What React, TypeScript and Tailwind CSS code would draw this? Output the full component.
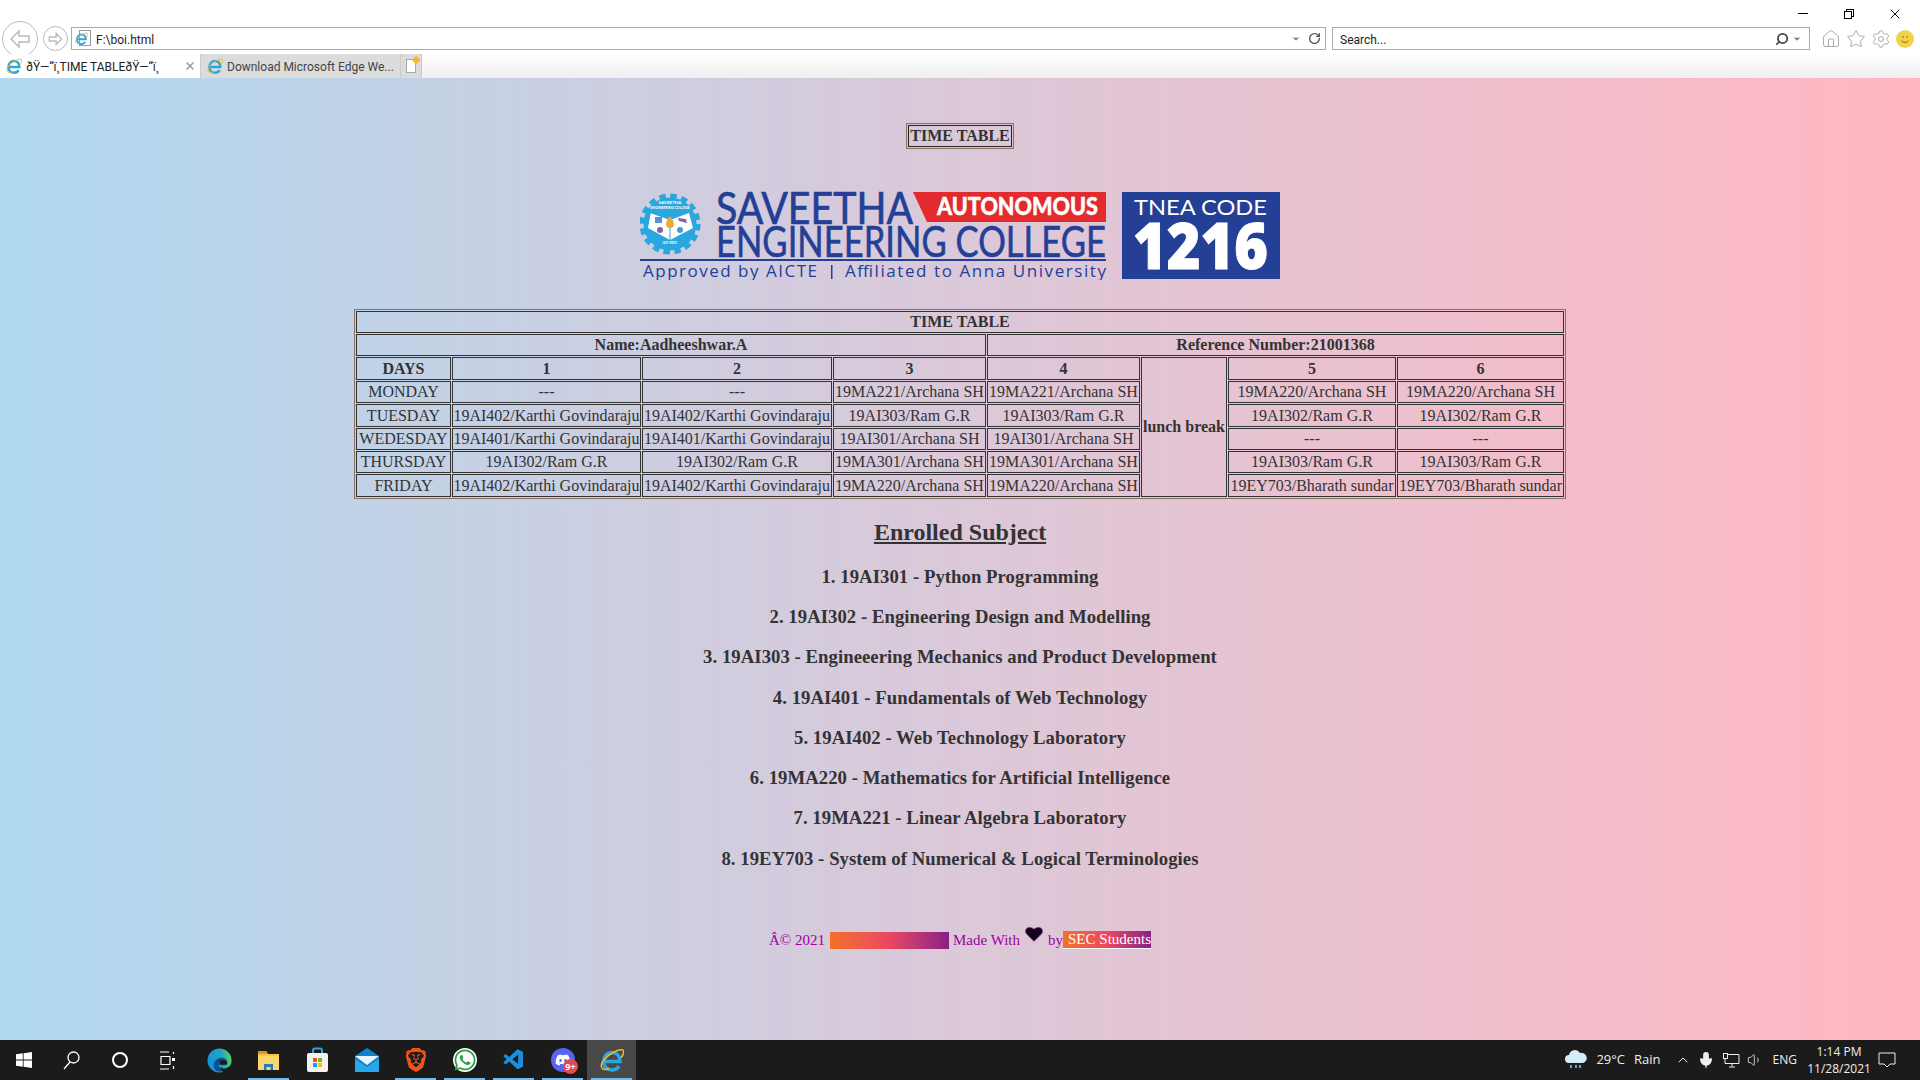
import { ChevronDown, ChevronUp, Home, Mic, RotateCw, Search, Settings, Star, Volume1, X } from 'lucide-react';
import { FaDiscord, FaWhatsapp } from 'react-icons/fa';
import { SiBrave } from 'react-icons/si';
import { VscVscode } from 'react-icons/vsc';

const rows = [
  { day: 'MONDAY', height: 'h-[22px]', cells: ['---', '---', '19MA221/Archana SH', '19MA221/Archana SH', '19MA220/Archana SH', '19MA220/Archana SH'] },
  { day: 'TUESDAY', height: 'h-[23px]', cells: ['19AI402/Karthi Govindaraju', '19AI402/Karthi Govindaraju', '19AI303/Ram G.R', '19AI303/Ram G.R', '19AI302/Ram G.R', '19AI302/Ram G.R'] },
  { day: 'WEDESDAY', height: 'h-[22px]', cells: ['19AI401/Karthi Govindaraju', '19AI401/Karthi Govindaraju', '19AI301/Archana SH', '19AI301/Archana SH', '---', '---'] },
  { day: 'THURSDAY', height: 'h-[22px]', cells: ['19AI302/Ram G.R', '19AI302/Ram G.R', '19MA301/Archana SH', '19MA301/Archana SH', '19AI303/Ram G.R', '19AI303/Ram G.R'] },
  { day: 'FRIDAY', height: 'h-[23px]', cells: ['19AI402/Karthi Govindaraju', '19AI402/Karthi Govindaraju', '19MA220/Archana SH', '19MA220/Archana SH', '19EY703/Bharath sundar', '19EY703/Bharath sundar'] },
];

const subjects = [
  '1. 19AI301 - Python Programming',
  '2. 19AI302 - Engineering Design and Modelling',
  '3. 19AI303 - Engineeering Mechanics and Product Development',
  '4. 19AI401 - Fundamentals of Web Technology',
  '5. 19AI402 - Web Technology Laboratory',
  '6. 19MA220 - Mathematics for Artificial Intelligence',
  '7. 19MA221 - Linear Algebra Laboratory',
  '8. 19EY703 - System of Numerical & Logical Terminologies',
];

const cellClass = 'border border-[#333] p-0 text-center align-middle whitespace-nowrap leading-[18px]';

const IeIcon = ({ size = 16 }: { size?: number }) => (
  <svg width={size} height={size} viewBox="0 0 24 24" fill="none">
    <path d="M4.500 13.500h15.500c0-5.500-3.300-9-8-9s-8.500 4-8.500 9 3.800 8.500 8.500 8.500c3.400 0 5.700-1.500 6.900-3.800" stroke="#2ba6de" strokeWidth="3.600" />
    <path d="M2 20C-1 16 6 8 14 4c5-2.500 9-3 9.500-1 .5 2-1 5-2.500 7M2 20c.8 2 4 2 7 .5" stroke="#efb82c" strokeWidth="1.500" />
  </svg>
);

const PageIcon = () => (
  <div className="relative h-[17px] w-[16px]">
    <div className="absolute right-0 top-0 h-[16px] w-[12px] border border-[#999] bg-white" />
    <div className="absolute left-0 top-[2px]">
      <IeIcon size={13} />
    </div>
  </div>
);

const Logo = () => (
  <svg width="640" height="90" viewBox="0 0 640 90" className="block">
    <circle cx="30" cy="34" r="28" fill="none" stroke="#2aa7df" strokeWidth="5" strokeDasharray="6.500 4.500" />
    <circle cx="30" cy="34" r="26.500" fill="#2aa7df" />
    <path d="M10.700 23.300 30 30 49 23 53 38 30 50 8 38Z" fill="#fff" />
    <path d="M30 32V51" stroke="#2aa7df" strokeWidth="1" />
    <path d="M30 26c2 3 4 5 4 8a4 4 0 0 1-8 0c0-3 2-5 4-8Z" fill="#f1a92f" />
    <rect x="15" y="27" width="7" height="6" fill="#5a8fd8" />
    <path d="M38 28l8 1 1 4-8-2Z" fill="#8a5db0" />
    <circle cx="20" cy="40" r="3" fill="#8a5db0" />
    <circle cx="40" cy="40" r="3" fill="#3f9bd0" />
    <text x="30" y="14" fontSize="4.500" fontWeight="700" textAnchor="middle" fill="#fff" fontFamily="Lato, sans-serif">SAVEETHA</text>
    <text x="30" y="19" fontSize="3.500" fontWeight="700" textAnchor="middle" fill="#fff" fontFamily="Lato, sans-serif">ENGINEERING COLLEGE</text>
    <text x="30" y="54" fontSize="3.500" fontWeight="700" textAnchor="middle" fill="#fff" fontFamily="Lato, sans-serif">ISO 9001</text>
    <text x="76" y="34" fontSize="44" fill="#233f96" stroke="#233f96" strokeWidth="0.700" fontFamily="Lato, sans-serif" textLength="197" lengthAdjust="spacingAndGlyphs">SAVEETHA</text>
    <polygon points="273,2 466,2 466,32 287,32" fill="#e32b2e" />
    <text x="297" y="25" fontSize="24" fontWeight="900" fill="#fff" stroke="#fff" strokeWidth="0.400" fontFamily="Lato, sans-serif" textLength="161" lengthAdjust="spacingAndGlyphs">AUTONOMOUS</text>
    <text x="76" y="67" fontSize="43" fill="#233f96" stroke="#233f96" strokeWidth="0.600" fontFamily="Lato, sans-serif" textLength="390" lengthAdjust="spacingAndGlyphs">ENGINEERING COLLEGE</text>
    <rect x="0" y="69" width="466" height="2" fill="#233f96" />
    <text x="3" y="87" fontSize="17" fill="#233f96" fontFamily="'Open Sans', sans-serif" textLength="174" lengthAdjust="spacing">Approved by AICTE</text>
    <rect x="191" y="75" width="1.500" height="14" fill="#233f96" />
    <text x="205" y="87" fontSize="17" fill="#233f96" fontFamily="'Open Sans', sans-serif" textLength="261" lengthAdjust="spacing">Affiliated to Anna University</text>
    <rect x="482" y="2" width="158" height="87" fill="#233f96" />
    <text x="494" y="25" fontSize="21" fill="#fff" fontFamily="Lato, sans-serif" textLength="133" lengthAdjust="spacingAndGlyphs">TNEA CODE</text>
    <text x="493" y="79" fontSize="63" fontWeight="800" fill="#fff" stroke="#fff" strokeWidth="1" fontFamily="'Open Sans', sans-serif" textLength="135" lengthAdjust="spacingAndGlyphs">1216</text>
  </svg>
);

const Chrome = () => (
  <div className="h-[78px] bg-white font-['Roboto',sans-serif] text-[12px] text-[#222]">
    <div className="flex h-[27px] items-center justify-end pr-[2px]">
      <div className="flex w-[46px] justify-center"><div className="h-px w-[10px] bg-black" /></div>
      <div className="flex w-[46px] justify-center">
        <div className="relative h-[10px] w-[10px]">
          <div className="absolute right-0 top-0 h-[8px] w-[8px] border border-black" />
          <div className="absolute bottom-0 left-0 h-[8px] w-[8px] border border-black bg-white" />
        </div>
      </div>
      <div className="flex w-[46px] justify-center"><X size={16} strokeWidth={1.400} color="#000" /></div>
    </div>
    <div className="flex h-[23px] items-center">
      <div className="ml-[2px] flex h-[36px] w-[36px] shrink-0 items-center justify-center rounded-full border border-[#bbb] bg-white">
        <svg width="22" height="20" viewBox="0 0 22 20" fill="none" stroke="#bbb" strokeWidth="1.500"><path d="M10 2 2 10l8 8v-5h10V7H10Z" /></svg>
      </div>
      <div className="ml-[5px] flex h-[25px] w-[25px] shrink-0 items-center justify-center rounded-full border border-[#bbb]">
        <svg width="15" height="14" viewBox="0 0 22 20" fill="none" stroke="#bbb" strokeWidth="2"><path d="M12 2l8 8-8 8v-5H2V7h10Z" /></svg>
      </div>
      <div className="ml-[3px] flex h-[23px] w-[1255px] shrink-0 items-center border border-[#aaa] pl-[3px] pr-[4px]">
        <PageIcon />
        <span className="ml-[5px] pt-[2px]">F:\boi.html</span>
        <ChevronDown size={10} className="ml-auto" fill="#777" color="#777" />
        <RotateCw size={13} strokeWidth={2.500} color="#555" className="ml-[7px]" />
      </div>
      <div className="ml-[6px] flex h-[23px] w-[478px] shrink-0 items-center border border-[#aaa] pl-[7px] pr-[7px]">
        <span className="pt-[2px]">Search...</span>
        <Search size={14} strokeWidth={3} color="#444" className="ml-auto -scale-x-100" />
        <ChevronDown size={10} fill="#777" color="#777" className="ml-[3px]" />
      </div>
      <div className="ml-[11px] flex items-center gap-[5px]">
        <Home size={20} strokeWidth={1} color="#999" />
        <Star size={20} strokeWidth={1} color="#999" />
        <Settings size={20} strokeWidth={1} color="#999" />
        <div className="relative flex h-[18px] w-[18px] items-center justify-center rounded-full bg-[#f2d24b]">
          <svg width="14" height="14" viewBox="0 0 14 14" fill="none" stroke="#8a6d10" strokeWidth="1"><path d="M3.500 8.500c1 2.500 6 2.500 7 0" /><path d="M5 4v2M9 4v2" /></svg>
        </div>
      </div>
    </div>
    <div className="mt-[4px] flex h-[24px] bg-gradient-to-b from-white to-[#efefef]">
      <div className="flex w-[200px] items-center bg-white pl-[6px]">
        <IeIcon />
        <span className="ml-[4px] whitespace-nowrap pt-px">ðŸ—“ï¸TIME TABLEðŸ—“ï¸</span>
        <X size={12} strokeWidth={3} color="#999" className="ml-auto mr-[4px]" />
      </div>
      <div className="flex w-[200px] items-center border-l border-[#ccc] bg-[#dcdcdc] pl-[6px] text-[#444]">
        <IeIcon />
        <span className="ml-[4px] whitespace-nowrap pt-px">Download Microsoft Edge We...</span>
      </div>
      <div className="relative flex w-[22px] items-center justify-center border-x border-[#ccc] bg-[#dcdcdc]">
        <div className="h-[14px] w-[10px] border border-[#aaa] bg-white" />
        <div className="absolute right-[2px] top-[3px] h-[6px] w-[6px] rotate-45 bg-[#f5b52e]" />
      </div>
    </div>
  </div>
);

const Taskbar = () => {
  const appClass = 'relative flex h-full w-[49px] items-center justify-center';
  const activeBar = <div className="absolute bottom-0 left-[4px] right-[4px] h-[2px] bg-[#76b9ed]" />;
  return (
    <div className="flex h-[40px] items-center bg-[#1b1b1b] font-['Open_Sans',sans-serif] text-[#eee]">
      <div className="flex h-full w-[47px] items-center justify-center">
        <svg width="16" height="16" viewBox="0 0 16 16" fill="#fff"><path d="M0 2.300 6.800 1.300V7.600H0ZM7.600 1.200 16 0V7.600H7.600ZM0 8.400H6.800V14.700L0 13.700ZM7.600 8.400H16V16L7.600 14.800Z" /></svg>
      </div>
      <div className="flex h-full w-[49px] items-center justify-center">
        <svg width="17" height="19" viewBox="0 0 17 19" fill="none" stroke="#fff" strokeWidth="1.300"><circle cx="10.500" cy="6.500" r="5.500" /><path d="M7 11 1 18" /></svg>
      </div>
      <div className="flex h-full w-[48px] items-center justify-center">
        <div className="h-[16px] w-[16px] rounded-full border-2 border-white" />
      </div>
      <div className="flex h-full w-[48px] items-center justify-center">
        <svg width="16" height="19" viewBox="0 0 16 19" fill="none" stroke="#fff" strokeWidth="1.200"><path d="M0 1h9M0 18h9M1 5.500h9v8H1Z" /><rect x="12" y="7" width="3" height="3" fill="#fff" stroke="none" /><path d="M13.500 1v2M13.500 15v3" /></svg>
      </div>
      <div className={`${appClass} ml-[3px]`}>
        <svg width="25" height="25" viewBox="0 0 26 26">
          <defs>
            <linearGradient id="edgeBody" x1="0" y1="0.500" x2="1" y2="0.300"><stop offset="0" stopColor="#1590d8" /><stop offset="0.600" stopColor="#1fa6c4" /><stop offset="1" stopColor="#5fd25c" /></linearGradient>
          </defs>
          <circle cx="13" cy="13" r="12.500" fill="url(#edgeBody)" />
          <path d="M10 24c-4-3-4-9 0-12 4-3 10-2 11 2 .5 2-1 3.500-3 3.500H12c0 3 3 5 6 5-2 2-5 2.500-8 1.500Z" fill="#0b4f96" />
          <path d="M18 25.500c3-1 6-4 7.500-9-2 3-4 4.500-7.500 5-1.500 0-3-1-4-2 0 3 1 5 4 6Z" fill="#1b1b1b" />
          <path d="M14 17.500h5c1.500 0 2.500-1 2-2.500-1-2.500-5-3.500-8-1.500Z" fill="#1b1b1b" />
        </svg>
      </div>
      <div className={appClass}>
        <svg width="23" height="22" viewBox="0 0 23 22">
          <path d="M1 2h8l2 3h11v16H1Z" fill="#f4c24d" />
          <path d="M1 2h8l2 3H1Z" fill="#d59a28" />
          <path d="M1 7h21v14H1Z" fill="#fbd669" />
          <path d="M7 21v-6h9v6h-2.500v-3h-4v3Z" fill="#1f7fc4" />
        </svg>
        {activeBar}
      </div>
      <div className={appClass}>
        <svg width="23" height="26" viewBox="0 0 23 26">
          <path d="M7 7V3.500a2 2 0 0 1 2-2h5a2 2 0 0 1 2 2V7" fill="none" stroke="#29a3df" strokeWidth="2" />
          <rect x="1" y="6" width="21" height="19" rx="2" fill="#f2f2f2" />
          <rect x="7" y="11" width="4" height="4" fill="#f25022" />
          <rect x="12" y="11" width="4" height="4" fill="#7fba00" />
          <rect x="7" y="16" width="4" height="4" fill="#00a4ef" />
          <rect x="12" y="16" width="4" height="4" fill="#ffb900" />
        </svg>
      </div>
      <div className={appClass}>
        <svg width="24" height="24" viewBox="0 0 24 24">
          <path d="M0 8 12 0 24 8V24H0Z" fill="#0f82ce" />
          <path d="M0 8H24L12 17Z" fill="#e6f4fc" />
          <path d="M0 24V11L12 19 24 11V24Z" fill="#2aa7ea" />
        </svg>
      </div>
      <div className={appClass}>
        <SiBrave size={24} color="#f1511b" />
        {activeBar}
      </div>
      <div className={appClass}>
        <div className="flex h-[24px] w-[24px] items-center justify-center rounded-full bg-white">
          <FaWhatsapp size={24} color="#25a244" />
        </div>
        {activeBar}
      </div>
      <div className={appClass}>
        <VscVscode size={24} color="#1b8fdc" />
        {activeBar}
      </div>
      <div className={appClass}>
        <div className="flex h-[24px] w-[24px] items-center justify-center rounded-full bg-[#5865f2]">
          <FaDiscord size={16} color="#fff" />
        </div>
        <div className="absolute bottom-[6px] right-[9px] flex h-[15px] w-[15px] items-center justify-center rounded-full bg-[#e5484d] text-[9px] font-bold text-white">9+</div>
        {activeBar}
      </div>
      <div className={`${appClass} bg-[#484848]`}>
        <IeIcon size={24} />
        {activeBar}
      </div>
      <div className="ml-auto flex h-full items-center text-[13px]">
        <svg width="24" height="22" viewBox="0 0 24 22" fill="#d6ecfa">
          <path d="M5 14a4 4 0 0 1 0-8 6 6 0 0 1 11-2 5 5 0 0 1 3 10Z" />
          <path d="M7 16v3M12 16v3M16 16v3" stroke="#4ea9e6" strokeWidth="2" />
        </svg>
        <span className="ml-[8px]">29°C</span>
        <span className="ml-[9px]">Rain</span>
        <ChevronUp size={16} strokeWidth={1.500} className="ml-[14px]" />
        <Mic size={18} strokeWidth={1.500} fill="#eee" className="ml-[6px]" />
        <svg width="17" height="15" viewBox="0 0 17 15" fill="none" stroke="#eee" className="ml-[8px]"><path d="M5 1.500h11v9H2V6" /><rect x="0.500" y="0.500" width="4" height="5" /><path d="M9 11v2.500M6 14h6" /></svg>
        <Volume1 size={16} strokeWidth={1.200} className="ml-[7px]" />
        <span className="ml-[10px] text-[12px]">ENG</span>
        <div className="ml-[12px] flex w-[60px] flex-col items-center text-[12px] leading-[17px]">
          <span>1:14 PM</span>
          <span>11/28/2021</span>
        </div>
        <svg width="18" height="17" viewBox="0 0 18 17" fill="none" stroke="#eee" className="ml-[9px] mr-[24px]">
          <path d="M1 1h16v11h-5l-3 3-3-3H1Z" />
        </svg>
      </div>
    </div>
  );
};

export default function App() {
  return (
    <div className="flex h-screen flex-col overflow-hidden">
      <Chrome />
      <main className="flex-1 bg-gradient-to-r from-[#aed8f0] to-[#ffb6c1] font-['Liberation_Serif',serif] text-[16px] text-[#333]">
        <div className="mx-auto mt-[45px] w-[108px] border border-[#8a7060] p-px">
          <div className="flex h-[22px] items-center justify-center border border-[#222] font-bold">TIME TABLE</div>
        </div>
        <div className="mx-auto mt-[41px] w-[640px]">
          <Logo />
        </div>
        <table className="mx-auto mt-[29px] w-[1212px] table-fixed border-separate border-spacing-px border border-[#8a7060]">
          <colgroup>
            <col className="w-[95px]" />
            <col className="w-[189px]" />
            <col className="w-[190px]" />
            <col className="w-[153px]" />
            <col className="w-[153px]" />
            <col className="w-[86px]" />
            <col className="w-[168px]" />
            <col className="w-[167px]" />
          </colgroup>
          <tbody>
            <tr className="h-[22px]">
              <th colSpan={8} className={cellClass}>TIME TABLE</th>
            </tr>
            <tr className="h-[22px]">
              <th colSpan={4} className={cellClass}>Name:Aadheeshwar.A</th>
              <th colSpan={4} className={cellClass}>Reference Number:21001368</th>
            </tr>
            <tr className="h-[23px]">
              <th className={cellClass}>DAYS</th>
              <th className={cellClass}>1</th>
              <th className={cellClass}>2</th>
              <th className={cellClass}>3</th>
              <th className={cellClass}>4</th>
              <th rowSpan={6} className={cellClass}>lunch break</th>
              <th className={cellClass}>5</th>
              <th className={cellClass}>6</th>
            </tr>
            {rows.map((row) => (
              <tr key={row.day} className={row.height}>
                <td className={cellClass}>{row.day}</td>
                {row.cells.map((cell, i) => (
                  <td key={i} className={cellClass}>{cell}</td>
                ))}
              </tr>
            ))}
          </tbody>
        </table>
        <h2 className="mt-[20px] text-center text-[24px] font-bold leading-[27px] underline">Enrolled Subject</h2>
        <div className="mt-[20px] flex flex-col gap-[18.72px] text-center text-[18.72px] font-bold leading-[21.5px] tracking-[0.05px]">
          {subjects.map((subject) => (
            <h3 key={subject}>{subject}</h3>
          ))}
        </div>
        <div className="mt-[56px] flex items-end justify-center text-[15px] leading-[17px] text-[#a000a0]">
          <span>Â© 2021</span>
          <span className="ml-[5px] h-[17px] w-[119px] bg-gradient-to-r from-[#f37021] via-[#ec4561] to-[#8a1f82]" />
          <span className="ml-[4px]">Made With</span>
          <svg width="20" height="18" viewBox="0 0 20 18" className="mx-[4px] mb-[6px]">
            <path d="M10 16.500 2.500 9C-1 5 4 -.500 10 4c6-4.500 11 1 7.500 5Z" fill="#10001a" stroke="#e040c0" strokeWidth="1" strokeDasharray="1.500 1" />
          </svg>
          <span>by</span>
          <span className="border-b border-white bg-gradient-to-r from-[#f37021] via-[#ec4561] to-[#8a1f82] pl-[5px] text-white">SEC Students</span>
        </div>
      </main>
      <Taskbar />
    </div>
  );
}
